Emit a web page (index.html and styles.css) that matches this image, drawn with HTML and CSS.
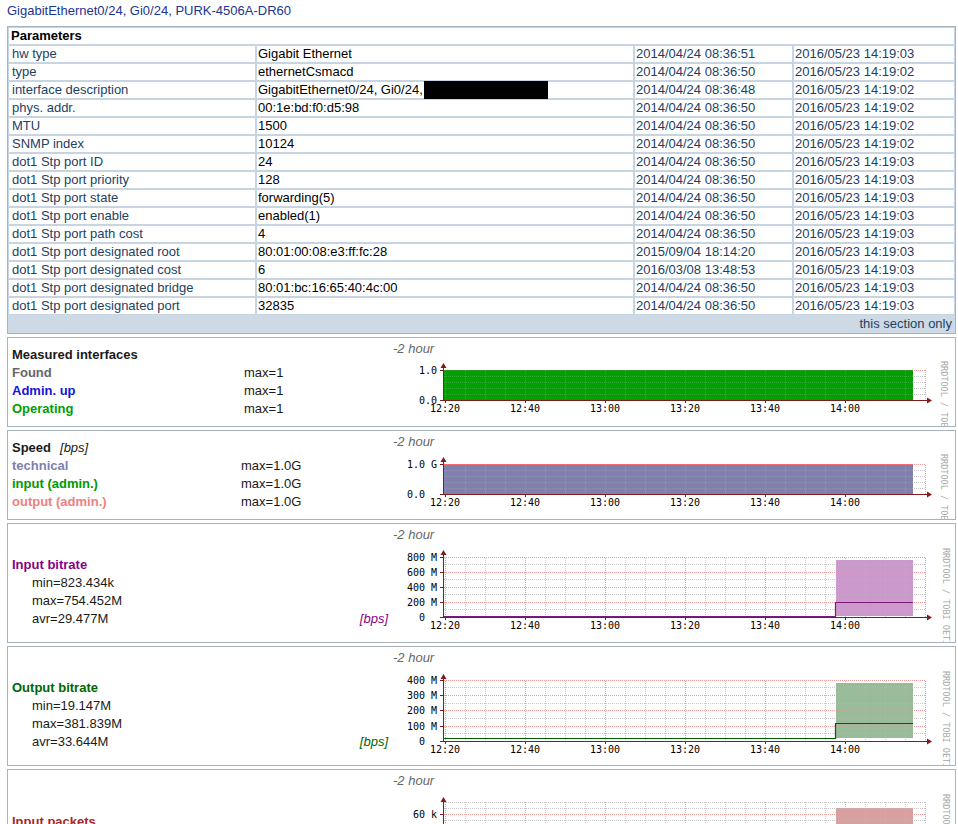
FILE: index.html
```html
<!DOCTYPE html>
<html lang="en">
<head>
<meta charset="utf-8">
<title>GigabitEthernet0/24</title>
<link rel="stylesheet" href="styles.css">
</head>
<body>
<div class="title">GigabitEthernet0/24, Gi0/24, PURK-4506A-DR60</div>

<div class="params">
  <div class="head">Parameters</div>

  <div class="k">hw type</div><div class="v">Gigabit Ethernet</div><div class="d">2014/04/24 08:36:51</div><div class="d">2016/05/23 14:19:03</div>
  <div class="k">type</div><div class="v">ethernetCsmacd</div><div class="d">2014/04/24 08:36:50</div><div class="d">2016/05/23 14:19:02</div>
  <div class="k">interface description</div><div class="v">GigabitEthernet0/24, Gi0/24, <span class="redact"></span></div><div class="d">2014/04/24 08:36:48</div><div class="d">2016/05/23 14:19:02</div>
  <div class="k">phys. addr.</div><div class="v">00:1e:bd:f0:d5:98</div><div class="d">2014/04/24 08:36:50</div><div class="d">2016/05/23 14:19:02</div>
  <div class="k">MTU</div><div class="v">1500</div><div class="d">2014/04/24 08:36:50</div><div class="d">2016/05/23 14:19:02</div>
  <div class="k">SNMP index</div><div class="v">10124</div><div class="d">2014/04/24 08:36:50</div><div class="d">2016/05/23 14:19:02</div>
  <div class="k">dot1 Stp port ID</div><div class="v">24</div><div class="d">2014/04/24 08:36:50</div><div class="d">2016/05/23 14:19:03</div>
  <div class="k">dot1 Stp port priority</div><div class="v">128</div><div class="d">2014/04/24 08:36:50</div><div class="d">2016/05/23 14:19:03</div>
  <div class="k">dot1 Stp port state</div><div class="v">forwarding(5)</div><div class="d">2014/04/24 08:36:50</div><div class="d">2016/05/23 14:19:03</div>
  <div class="k">dot1 Stp port enable</div><div class="v">enabled(1)</div><div class="d">2014/04/24 08:36:50</div><div class="d">2016/05/23 14:19:03</div>
  <div class="k">dot1 Stp port path cost</div><div class="v">4</div><div class="d">2014/04/24 08:36:50</div><div class="d">2016/05/23 14:19:03</div>
  <div class="k">dot1 Stp port designated root</div><div class="v">80:01:00:08:e3:ff:fc:28</div><div class="d">2015/09/04 18:14:20</div><div class="d">2016/05/23 14:19:03</div>
  <div class="k">dot1 Stp port designated cost</div><div class="v">6</div><div class="d">2016/03/08 13:48:53</div><div class="d">2016/05/23 14:19:03</div>
  <div class="k">dot1 Stp port designated bridge</div><div class="v">80:01:bc:16:65:40:4c:00</div><div class="d">2014/04/24 08:36:50</div><div class="d">2016/05/23 14:19:03</div>
  <div class="k">dot1 Stp port designated port</div><div class="v">32835</div><div class="d">2014/04/24 08:36:50</div><div class="d">2016/05/23 14:19:03</div>

  <div class="foot">this section only</div>
</div>

<!-- Measured interfaces -->
<div class="graph">
  <div class="legend cols-a">
    <div class="row"><b>Measured interfaces</b><span></span></div>
    <div class="row"><b class="c-found">Found</b><span class="val">max=1</span></div>
    <div class="row"><b class="c-admin">Admin. up</b><span class="val">max=1</span></div>
    <div class="row"><b class="c-oper">Operating</b><span class="val">max=1</span></div>
  </div>
  <div class="plot">
    <div class="range">-2 hour</div>
    <svg class="chart h70" width="565" height="70" viewBox="0 0 565 70">
      <defs>
        <pattern id="vmin" patternUnits="userSpaceOnUse" x="55" y="0" width="20" height="2"><rect width="1" height="1" fill="#c8c8c8"/></pattern>
        <pattern id="vmaj" patternUnits="userSpaceOnUse" x="55" y="0" width="80" height="2"><rect width="1" height="1" fill="#f09a9a"/></pattern>
      </defs>
      <g id="g1">
        <rect x="54" y="14" width="482" height="30" fill="url(#vmin)"/>
        <rect x="54" y="14" width="482" height="30" fill="url(#vmaj)"/>
        <path class="hmin" d="M54 20.5H536M54 26.5H536M54 32.5H536M54 38.5H536"/>
        <path class="hmaj" d="M54 14.5H536"/>
      </g>
      <rect x="54" y="14" width="469" height="30" fill="#00a000"/>
      <use href="#g1" opacity="0.25"/>
      <path class="axis" d="M53.5 45V11M50 44.5H538M50 14.5H53M55.5 45V47M135.5 45V47M215.5 45V47M295.5 45V47M375.5 45V47M455.5 45V47"/>
      <path class="arrow" d="M53.5 7L50.5 12H56.5Z M542 44.5L537 41.5V47.5Z"/>
      <text class="ax" x="47" y="18" text-anchor="end">1.0</text>
      <text class="ax" x="47" y="48" text-anchor="end">0.0</text>
      <g class="ax" text-anchor="middle">
        <text x="55" y="56">12:20</text><text x="135" y="56">12:40</text><text x="215" y="56">13:00</text>
        <text x="295" y="56">13:20</text><text x="375" y="56">13:40</text><text x="455" y="56">14:00</text>
      </g>
      <text class="wm" transform="translate(551 5) rotate(90)">RRDTOOL / TOBI OETIKER</text>
    </svg>
  </div>
</div>

<!-- Speed -->
<div class="graph">
  <div class="legend cols-b">
    <div class="row"><span><b>Speed</b><i class="unit-k">[bps]</i></span><span></span></div>
    <div class="row"><b class="c-tech">technical</b><span class="val">max=1.0G</span></div>
    <div class="row"><b class="c-in">input (admin.)</b><span class="val">max=1.0G</span></div>
    <div class="row"><b class="c-out">output (admin.)</b><span class="val">max=1.0G</span></div>
  </div>
  <div class="plot">
    <div class="range">-2 hour</div>
    <svg class="chart h70" width="565" height="70" viewBox="0 0 565 70">
      <g id="g2">
        <rect x="54" y="15" width="482" height="30" fill="url(#vmin)"/>
        <rect x="54" y="15" width="482" height="30" fill="url(#vmaj)"/>
        <path class="hmin" d="M54 21.5H536M54 27.5H536M54 33.5H536M54 39.5H536"/>
        <path class="hmaj" d="M54 15.5H536"/>
      </g>
      <rect x="54" y="15" width="469" height="30" fill="#8080b0"/>
      <use href="#g2" opacity="0.25"/>
      <path class="line-red" d="M54 15.5H523"/>
      <path class="axis" d="M53.5 46V12M50 45.5H538M50 15.5H53M55.5 46V48M135.5 46V48M215.5 46V48M295.5 46V48M375.5 46V48M455.5 46V48"/>
      <path class="arrow" d="M53.5 8L50.5 13H56.5Z M542 45.5L537 42.5V48.5Z"/>
      <text class="ax" x="47" y="19" text-anchor="end">1.0 G</text>
      <text class="ax" x="35" y="49" text-anchor="end">0.0</text>
      <g class="ax" text-anchor="middle">
        <text x="55" y="57">12:20</text><text x="135" y="57">12:40</text><text x="215" y="57">13:00</text>
        <text x="295" y="57">13:20</text><text x="375" y="57">13:40</text><text x="455" y="57">14:00</text>
      </g>
      <text class="wm" transform="translate(551 5) rotate(90)">RRDTOOL / TOBI OETIKER</text>
    </svg>
  </div>
</div>

<!-- Input bitrate -->
<div class="graph">
  <div class="legend">
    <div class="row">&nbsp;</div>
    <div class="ltitle c-inbit">Input bitrate</div>
    <div class="stat">min=823.434k</div>
    <div class="stat">max=754.452M</div>
    <div class="stat">avr=29.477M<i class="unit c-inbit">[bps]</i></div>
  </div>
  <div class="plot">
    <div class="range">-2 hour</div>
    <svg class="chart h100" width="565" height="100" viewBox="0 0 565 100">
      <g id="g3">
        <rect x="54" y="15" width="482" height="60" fill="url(#vmin)"/>
        <rect x="54" y="15" width="482" height="60" fill="url(#vmaj)"/>
        <path class="hmin" d="M54 22.5H536M54 37.5H536M54 52.5H536M54 67.5H536"/>
        <path class="hmaj" d="M54 15.5H536M54 30.5H536M54 45.5H536M54 60.5H536"/>
      </g>
      <rect x="446" y="18" width="77" height="56" fill="#cc99cc"/>
      <use href="#g3" opacity="0.25"/>
      <path class="axis" d="M53.5 76V12M50 75.5H538M50 15.5H53M50 30.5H53M50 45.5H53M50 60.5H53M55.5 76V78M135.5 76V78M215.5 76V78M295.5 76V78M375.5 76V78M455.5 76V78"/>
      <path class="line-purple" d="M54 74.5H445.5V60.5H523"/>
      <path class="arrow" d="M53.5 8L50.5 13H56.5Z M542 75.5L537 72.5V78.5Z"/>
      <g class="ax" text-anchor="end">
        <text x="47" y="19">800 M</text><text x="47" y="34">600 M</text><text x="47" y="49">400 M</text>
        <text x="47" y="64">200 M</text><text x="35" y="79">0</text>
      </g>
      <g class="ax" text-anchor="middle">
        <text x="55" y="87">12:20</text><text x="135" y="87">12:40</text><text x="215" y="87">13:00</text>
        <text x="295" y="87">13:20</text><text x="375" y="87">13:40</text><text x="455" y="87">14:00</text>
      </g>
      <text class="wm" transform="translate(553 6) rotate(90)">RRDTOOL / TOBI OETIKER</text>
    </svg>
  </div>
</div>

<!-- Output bitrate -->
<div class="graph">
  <div class="legend">
    <div class="row">&nbsp;</div>
    <div class="ltitle c-outbit">Output bitrate</div>
    <div class="stat">min=19.147M</div>
    <div class="stat">max=381.839M</div>
    <div class="stat">avr=33.644M<i class="unit c-outbit">[bps]</i></div>
  </div>
  <div class="plot">
    <div class="range">-2 hour</div>
    <svg class="chart h100" width="565" height="100" viewBox="0 0 565 100">
      <g id="g4">
        <rect x="54" y="15" width="482" height="61" fill="url(#vmin)"/>
        <rect x="54" y="15" width="482" height="61" fill="url(#vmaj)"/>
        <path class="hmin" d="M54 22.5H536M54 38.5H536M54 53.5H536M54 68.5H536"/>
        <path class="hmaj" d="M54 15.5H536M54 30.5H536M54 45.5H536M54 61.5H536"/>
      </g>
      <rect x="446" y="18" width="77" height="55" fill="#99bb99"/>
      <use href="#g4" opacity="0.25"/>
      <path class="axis" d="M53.5 77V12M50 76.5H538M50 15.5H53M50 30.5H53M50 45.5H53M50 61.5H53M55.5 77V79M135.5 77V79M215.5 77V79M295.5 77V79M375.5 77V79M455.5 77V79"/>
      <path class="line-green" d="M54 73.5H445.5V58.5H523"/>
      <path class="arrow" d="M53.5 9L50.5 14H56.5Z M542 76.5L537 73.5V79.5Z"/>
      <g class="ax" text-anchor="end">
        <text x="47" y="19">400 M</text><text x="47" y="34">300 M</text><text x="47" y="49">200 M</text>
        <text x="47" y="65">100 M</text><text x="35" y="80">0</text>
      </g>
      <g class="ax" text-anchor="middle">
        <text x="55" y="88">12:20</text><text x="135" y="88">12:40</text><text x="215" y="88">13:00</text>
        <text x="295" y="88">13:20</text><text x="375" y="88">13:40</text><text x="455" y="88">14:00</text>
      </g>
      <text class="wm" transform="translate(553 6) rotate(90)">RRDTOOL / TOBI OETIKER</text>
    </svg>
  </div>
</div>

<!-- Input packets -->
<div class="graph">
  <div class="legend pk">
    <div class="row">&nbsp;</div>
    <div class="row">&nbsp;</div>
    <div class="ltitle c-inpkt">Input packets</div>
    <div class="stat">min=1.204k</div>
    <div class="stat">max=66.813k</div>
    <div class="stat">avr=3.557k<i class="unit c-inpkt">[pps]</i></div>
  </div>
  <div class="plot">
    <div class="range">-2 hour</div>
    <svg class="chart h100" width="565" height="100" viewBox="0 0 565 100">
      <g id="g5">
        <rect x="54" y="13" width="482" height="87" fill="url(#vmin)"/>
        <rect x="54" y="13" width="482" height="87" fill="url(#vmaj)"/>
        <path class="hmin" d="M54 14.5H536M54 20.5H536M54 32.5H536M54 38.5H536"/>
        <path class="hmaj" d="M54 26.5H536"/>
      </g>
      <rect x="446" y="20" width="77" height="80" fill="#d8a0a0"/>
      <use href="#g5" opacity="0.25"/>
      <path class="axis" d="M53.5 100V12M50 26.5H53"/>
      <path class="arrow" d="M53.5 9L50.5 14H56.5Z"/>
      <text class="ax" x="47" y="30" text-anchor="end">60 k</text>
      <text class="wm" transform="translate(553 6) rotate(90)">RRDTOOL / TOBI OETIKER</text>
    </svg>
  </div>
</div>
</body>
</html>
```

FILE: styles.css
```css
* {
  box-sizing: border-box;
}

html, body {
  background: #ffffff;
}

body {
  margin: 0;
  padding: 3px 2px 0 7px;
  font-family: "Liberation Sans", Arial, sans-serif;
  font-size: 13px;
  line-height: 16px;
  color: #000000;
  overflow: hidden;
}

.title {
  color: #1c3590;
  line-height: 16px;
  margin-bottom: 7px;
}

/* Parameters table */
.params {
  display: grid;
  grid-template-columns: 248px 378px 159px 162px;
  width: 949px;
  border: 1px solid #a4b3c2;
}

.params > div {
  height: 18px;
  line-height: 16px;
  border: 1px solid #c7d5e2;
  padding: 0 1px;
  white-space: nowrap;
  overflow: hidden;
}

.params .head {
  grid-column: 1 / -1;
  font-weight: bold;
  padding-left: 2px;
}

.params .k {
  color: #1d4163;
  padding-left: 3px;
}

.params .v {
  color: #000000;
  overflow: visible;
}

.params .d {
  color: #1d4163;
}

.params .foot {
  grid-column: 1 / -1;
  height: 18px;
  line-height: 16px;
  text-align: right;
  padding-right: 2px;
  background: #cddae6;
  border-color: #cddae6;
  color: #1d3f60;
}

.redact {
  display: inline-block;
  width: 124px;
  height: 16px;
  margin-left: -2px;
  vertical-align: top;
  background: #000000;
  box-shadow: 0 1px 0 #000000, 0 -1px 0 #000000;
}

/* graph boxes */
.graph {
  display: flex;
  width: 949px;
  margin-top: 3px;
  border: 1px solid #a9b3bd;
}

.legend {
  width: 382px;
  flex: none;
  padding: 0 2px 0 4px;
  display: flex;
  flex-direction: column;
  justify-content: center;
  line-height: 18px;
  color: #1a1a1a;
}

.legend.pk {
  padding-top: 4px;
}

.legend .row {
  display: grid;
  grid-template-columns: 232px auto;
  height: 18px;
}

.legend.cols-b .row {
  grid-template-columns: 229px auto;
}

.legend .val {
  color: #1a1a1a;
}

.unit-k {
  margin-left: 9px;
  font-style: italic;
}

.ltitle {
  font-weight: bold;
  height: 18px;
}

.stat {
  display: flex;
  justify-content: space-between;
  padding-left: 20px;
  height: 18px;
}

.unit {
  font-style: italic;
}

.c-found { color: #666666; }
.c-admin { color: #1414dc; }
.c-oper { color: #00a000; }
.c-tech { color: #8080b0; }
.c-in { color: #009900; }
.c-out { color: #f08080; }
.c-inbit { color: #880088; }
.c-outbit { color: #006600; }
.c-inpkt { color: #a82828; }

.plot {
  flex: 1;
  display: flex;
  flex-direction: column;
  overflow: hidden;
}

.range {
  font-style: italic;
  color: #666666;
  height: 18px;
  line-height: 15px;
  padding: 3px 0 0 3px;
}

.chart {
  display: block;
  width: 565px;
}

.h70 { height: 70px; }
.h100 { height: 100px; }

.chart .hmin {
  stroke: #c8c8c8;
  stroke-width: 1;
  stroke-dasharray: 1 1;
  fill: none;
}

.chart .hmaj {
  stroke: #f09a9a;
  stroke-width: 1;
  stroke-dasharray: 1 1;
  fill: none;
}

.chart .axis {
  stroke: #801c1c;
  stroke-width: 1;
  fill: none;
}

.chart .arrow {
  fill: #801c1c;
}

.chart .line-red {
  stroke: #f06a6a;
  stroke-width: 1;
  fill: none;
}

.chart .line-purple {
  stroke: #7a1a7a;
  stroke-width: 1.2;
  fill: none;
}

.chart .line-green {
  stroke: #005f00;
  stroke-width: 1.2;
  fill: none;
}

.chart .ax {
  font-family: "DejaVu Sans Mono", monospace;
  font-size: 10px;
  fill: #000000;
}

.chart .wm {
  font-family: "DejaVu Sans Mono", monospace;
  font-size: 8.5px;
  fill: #a8a8a8;
}
```
